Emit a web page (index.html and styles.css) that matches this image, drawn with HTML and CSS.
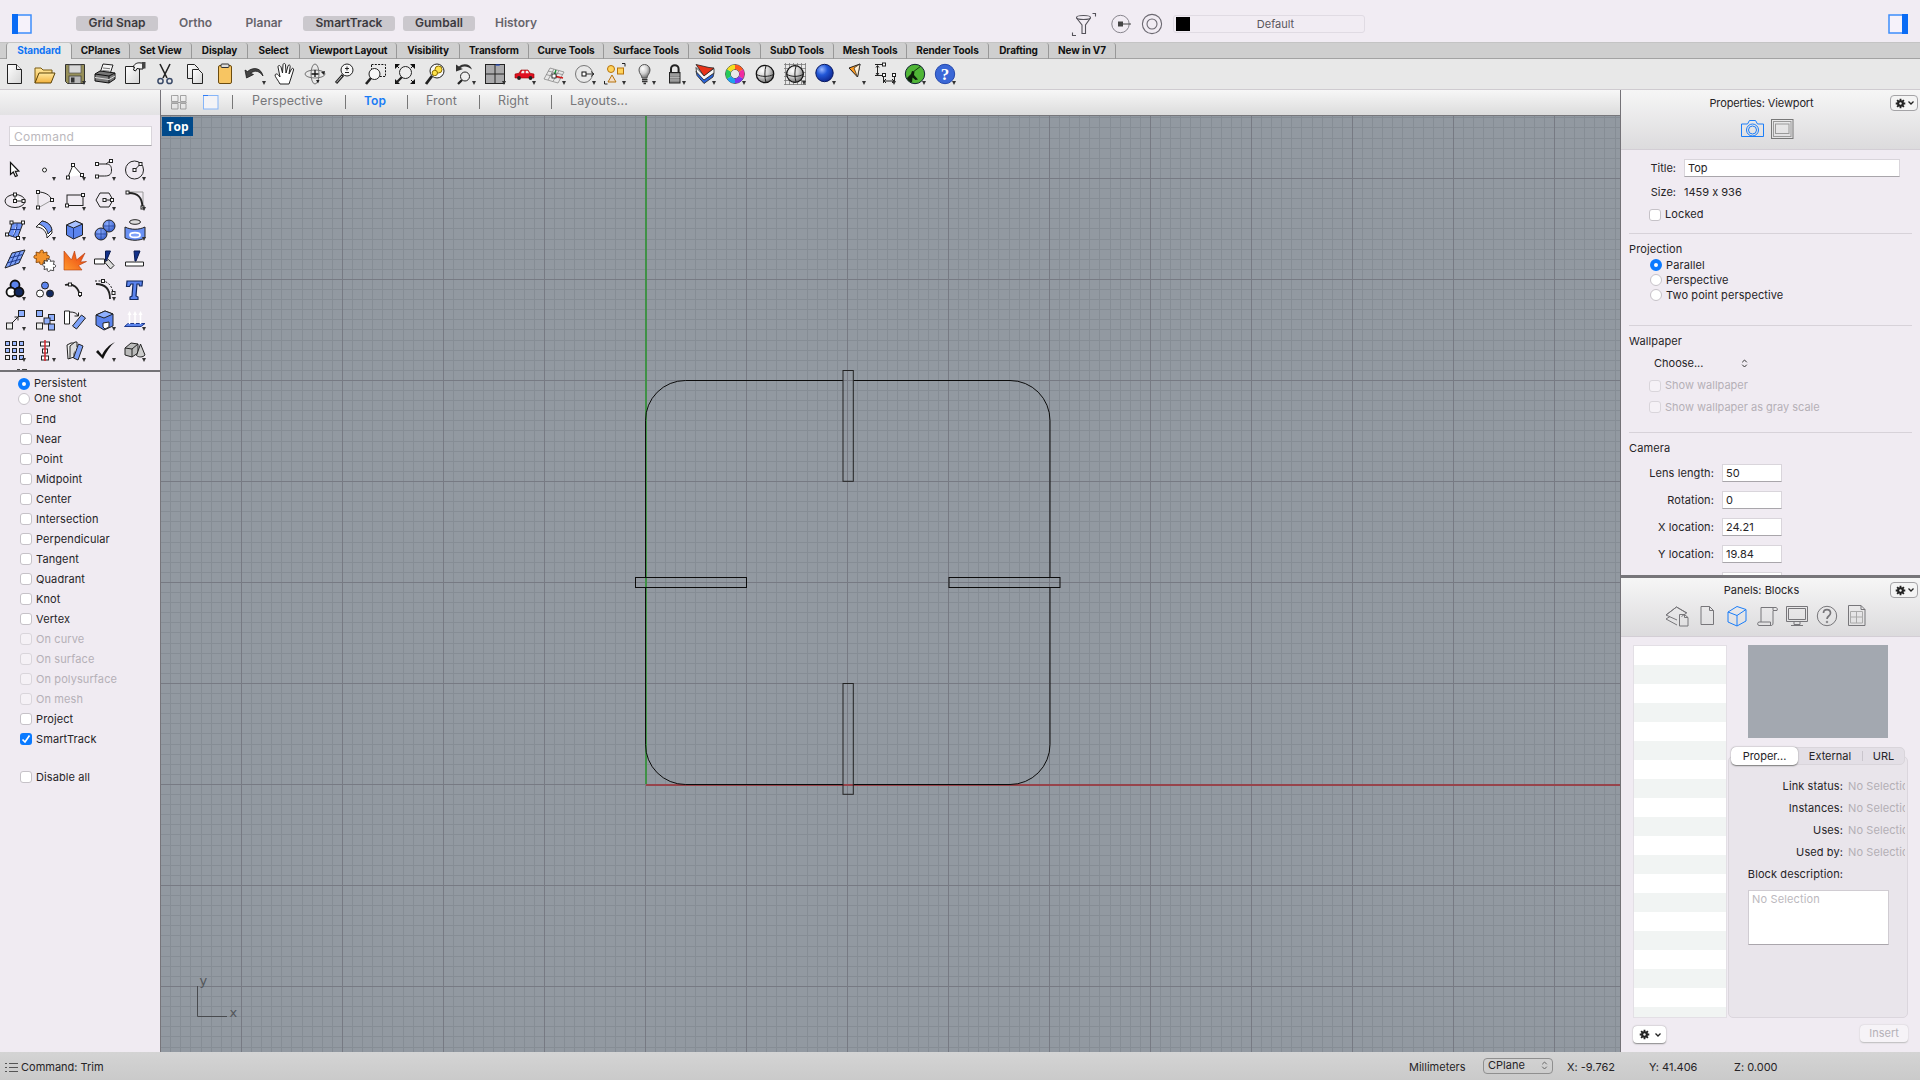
FILE: index.html
```html
<!DOCTYPE html>
<html lang="en">
<head>
<meta charset="utf-8">
<title>Rhino - Top viewport</title>
<link rel="stylesheet" href="styles.css">
</head>
<body>
<svg class="defs" width="0" height="0">
  <defs>
    <linearGradient id="paper" x1="0" y1="0" x2="1" y2="1"><stop offset="0" stop-color="#fff"/><stop offset="1" stop-color="#d4d4d4"/></linearGradient>
    <linearGradient id="folder" x1="0" y1="0" x2="0" y2="1"><stop offset="0" stop-color="#ffe9a0"/><stop offset="1" stop-color="#f3b23c"/></linearGradient>
    <radialGradient id="ball" cx=".35" cy=".3" r=".75"><stop offset="0" stop-color="#fff"/><stop offset=".5" stop-color="#d2d2d2"/><stop offset="1" stop-color="#6a6a6a"/></radialGradient>
    <radialGradient id="blueball" cx=".35" cy=".3" r=".8"><stop offset="0" stop-color="#9ab8ff"/><stop offset=".4" stop-color="#2258d8"/><stop offset="1" stop-color="#0a1f86"/></radialGradient>
    <radialGradient id="softball" cx=".4" cy=".3" r=".8"><stop offset="0" stop-color="#8fb0ff"/><stop offset="1" stop-color="#2f55c4"/></radialGradient>
    <linearGradient id="fire" x1="0" y1="1" x2="1" y2="0"><stop offset="0" stop-color="#ff9a2e"/><stop offset="1" stop-color="#e8380d"/></linearGradient>
    <symbol id="gear" viewBox="0 0 12 12"><g stroke="#222" stroke-width="2"><path d="M6 .8v10.4M.8 6h10.4M2.3 2.3l7.4 7.4M9.7 2.3L2.3 9.7"/></g><circle cx="6" cy="6" r="3.6" fill="#222"/><circle cx="6" cy="6" r="1.3" fill="#f4f4f4"/></symbol>
  </defs>
</svg>

<header class="topbar">
  <svg width="20" height="20" viewBox="0 0 20 20"><rect x="1" y="1" width="18" height="18" fill="#f6f2fa" stroke="#3d8dfb" stroke-width="1.5"/><rect x="0" y="0" width="6" height="20" fill="#0a6cf5"/></svg>
  <div class="modes">
    <span class="mode on w82">Grid Snap</span><span class="mode w75">Ortho</span><span class="mode w62">Planar</span><span class="mode on w92">SmartTrack</span><span class="mode on w72">Gumball</span><span class="mode w82">History</span>
  </div>
  <div class="filters">
    <svg width="26" height="24" viewBox="0 0 26 24" fill="none" stroke="#55535a" stroke-width="1.1"><ellipse cx="12.500" cy="5.500" rx="7" ry="2"/><path d="M5.500 6l5.500 7v8.500h3.500V13l5-7M21.500 1.500h3v3M1.500 20.500v3H5"/></svg>
    <svg width="24" height="24" viewBox="0 0 24 24" fill="none" stroke="#88858d" stroke-width="1"><circle cx="10.500" cy="12" r="8.700"/><path d="M11 12h10" stroke="#444"/><rect x="8" y="9.500" width="5" height="5" fill="#444" stroke="none"/></svg>
    <svg width="24" height="24" viewBox="0 0 24 24" fill="none" stroke="#6b6870" stroke-width="1.100"><circle cx="13" cy="12" r="9.600"/><circle cx="13" cy="12" r="5"/></svg>
    <div class="layer"><i></i><span>Default</span></div>
  </div>
  <svg width="20" height="20" viewBox="0 0 20 20"><rect x="1" y="1" width="18" height="18" fill="#f6f2fa" stroke="#3d8dfb" stroke-width="1.500"/><rect x="14" y="0" width="6" height="20" fill="#0a6cf5"/></svg>
</header>

<nav class="tabs">
  <span class="tab active t1">Standard</span><span class="tab t2">CPlanes</span><span class="tab t3">Set View</span><span class="tab t4">Display</span><span class="tab t5">Select</span><span class="tab t6">Viewport Layout</span><span class="tab t7">Visibility</span><span class="tab t8">Transform</span><span class="tab t9">Curve Tools</span><span class="tab t10">Surface Tools</span><span class="tab t11">Solid Tools</span><span class="tab t12">SubD Tools</span><span class="tab t13">Mesh Tools</span><span class="tab t14">Render Tools</span><span class="tab t15">Drafting</span><span class="tab t16">New in V7</span>
</nav>

<div class="toolbar">
  <span class="tool"><svg viewBox="0 0 30 30"><path d="M7.500 5.500h9l5 5v14h-14z" fill="url(#paper)" stroke="#222"/><path d="M16.500 5.500v5h5" fill="#eee" stroke="#222"/></svg></span>
  <span class="tool"><svg viewBox="0 0 30 30"><path d="M5 24V9h6l2 2h9v4" fill="url(#folder)" stroke="#7a5a10"/><path d="M5 24l4-10h16l-4 10z" fill="url(#folder)" stroke="#5a4208"/></svg></span>
  <span class="tool menu"><svg viewBox="0 0 30 30"><path d="M5.500 5.500h19v19h-17l-2-2z" fill="#97905a" stroke="#333"/><rect x="9" y="6" width="12" height="8" fill="#d9d9d9" stroke="#555" stroke-width=".7"/><rect x="9" y="17" width="12" height="7.500" fill="#b9b9b9" stroke="#333" stroke-width=".7"/><rect x="11" y="18.500" width="3.500" height="5" fill="#333"/></svg></span>
  <span class="tool"><svg viewBox="0 0 30 30"><path d="M10 14l3-9 10 1-3 9" fill="#f4f4f4" stroke="#222"/><path d="M13 9l7 .7M12.500 11.500l7 .7" stroke="#777"/><path d="M5 15l5-3 15 2v6l-6 4-14-2z" fill="#777" stroke="#111"/><path d="M5 15l14 2v7M19 17l6-3" stroke="#111" fill="none"/><path d="M5 18.500l14 2 6-3.500" stroke="#ddd" fill="none"/></svg></span>
  <span class="tool"><svg viewBox="0 0 30 30"><path d="M5.500 7.500h14v17h-14z" fill="url(#paper)" stroke="#222"/><path d="M13 8c2-4 5-4.500 8-4h2v6h-3l-3-.5-1.500 2.500-2-1 1-3z" fill="#f2f2f2" stroke="#111"/><rect x="22" y="3" width="3.500" height="6.500" fill="#444"/></svg></span>
  <span class="tool"><svg viewBox="0 0 30 30" fill="none"><path d="M10 5l7 14M20 5l-7 14" stroke="#222" stroke-width="1.600"/><circle cx="10.500" cy="22" r="2.600" stroke="#3a4a68" stroke-width="1.500"/><circle cx="19.500" cy="22" r="2.600" stroke="#3a4a68" stroke-width="1.500"/></svg></span>
  <span class="tool"><svg viewBox="0 0 30 30" fill="url(#paper)" stroke="#222"><path d="M7.500 5.500h7l4 4v10h-11z"/><path d="M12.500 10.500h6l4 4v10h-10z"/></svg></span>
  <span class="tool"><svg viewBox="0 0 30 30"><rect x="8.500" y="6.500" width="13" height="18" rx="1.500" fill="#f7c562" stroke="#6b4c10"/><rect x="11" y="5" width="8" height="3.500" rx="1" fill="#ddd" stroke="#333"/></svg></span>
  <span class="tool menu"><svg viewBox="0 0 30 30"><path d="M5 11l1.500 8 7-3.500-3-1.200c5-3.800 9-2 12.500 2.700-1.500-7.500-9-10-15.500-4.500z" fill="#444" stroke="#111" stroke-width=".7"/></svg></span>
  <span class="tool"><svg viewBox="0 0 30 30"><path d="M10 25c-2-4-5-7-5-9 1-2 3-1 5 2L8 8c0-2 2-2 3 0l1.500 6L13 6c0-2 2.500-2 2.500 0l.5 8 2-7c.5-1.700 2.500-1.200 2.200.6L19 15l2.500-5c1-1.500 2.500-.5 2 1L21 19l-2 6z" fill="#fff" stroke="#222"/></svg></span>
  <span class="tool"><svg viewBox="0 0 30 30" fill="none" stroke="#666" stroke-width=".9"><ellipse cx="15" cy="15" rx="10" ry="4"/><ellipse cx="15" cy="15" rx="4" ry="10"/><path d="M15 11v7M11.500 15h7" stroke="#111" stroke-width="1.300"/><path d="M16 21l3.500 0-1.500 3.500zM21 13l4-1-1 4z" fill="#222" stroke="none"/></svg></span>
  <span class="tool"><svg viewBox="0 0 30 30"><path d="M13 16l-7 8" stroke="#222" stroke-width="3"/><path d="M12 17l-5.500 6.300" stroke="#ccc"/><circle cx="17" cy="11" r="6" fill="#f7f7f7" stroke="#222"/><path d="M17 7.500v4M15 9.500h4M15 13.500h4" stroke="#222"/></svg></span>
  <span class="tool"><svg viewBox="0 0 30 30"><rect x="11.500" y="5.500" width="14" height="12" fill="none" stroke="#111" stroke-dasharray="2 1.300"/><path d="M11 19l-5 6" stroke="#222" stroke-width="2.600"/><circle cx="14.500" cy="15" r="5.500" fill="#f7f7f7" stroke="#222"/></svg></span>
  <span class="tool"><svg viewBox="0 0 30 30"><path d="M5 5h5l-5 5zM25 5h-5l5 5zM5 25h5l-5-5zM25 25h-5l5-5z" fill="#111"/><path d="M5 5l4 4M25 5l-4 4M25 25l-4-4" stroke="#111"/><path d="M12 18l-6 6" stroke="#222" stroke-width="2.300"/><circle cx="15.500" cy="13.500" r="6" fill="#eee" stroke="#222"/></svg></span>
  <span class="tool"><svg viewBox="0 0 30 30"><path d="M12 17l-6 8" stroke="#222" stroke-width="2.800"/><circle cx="17" cy="12" r="7" fill="#f7f7f7" stroke="#222"/><circle cx="18.500" cy="10.500" r="3.500" fill="#ffe34a" stroke="#8a6d00"/><circle cx="14.800" cy="14" r="2.700" fill="#ffe34a" stroke="#8a6d00"/></svg></span>
  <span class="tool menu"><svg viewBox="0 0 30 30"><path d="M6 5.500v7l7-2.500-2.500-1c3.500-2.500 7-1.700 11.500 1.500-1.500-5.500-8.500-7-13-3z" fill="#333"/><path d="M12 21l-4 4" stroke="#222" stroke-width="2.300"/><circle cx="15" cy="17.500" r="4.500" fill="#eee" stroke="#222"/></svg></span>
  <span class="tool menu"><svg viewBox="0 0 30 30"><rect x="5.500" y="5.500" width="19" height="19" fill="#a9a9ab" stroke="#222"/><path d="M15 5v20M5 15h20" stroke="#222"/><path d="M15.700 6h4" stroke="#2348b8" stroke-width="1.300"/></svg></span>
  <span class="tool menu"><svg viewBox="0 0 30 30"><path d="M5 19v-4l4-.8L11 11h7l2 3.200 4 .8v4z" fill="#e01020" stroke="#900" stroke-width=".6"/><path d="M12 11.800h2.300v2.400h-3.300zM15.700 11.800h2l1.300 2.400h-3.300z" fill="#eee"/><circle cx="9" cy="19" r="1.900" fill="#222"/><circle cx="20.500" cy="19" r="1.900" fill="#222"/></svg></span>
  <span class="tool menu"><svg viewBox="0 0 30 30" fill="none" stroke="#888" stroke-width=".8"><path d="M10 9l14 4-6 11L4 20zM8 12l15 3.700M6 15.500l15 4M14 10l-6 11M19 11.500l-6 11"/><path d="M14 17l9 2" stroke="#d01818" stroke-width="1.600"/><path d="M14 17l2-6" stroke="#179030" stroke-width="1.300"/><rect x="12" y="15" width="4" height="4" fill="#fff" stroke="#111"/></svg></span>
  <span class="tool menu"><svg viewBox="0 0 30 30" fill="none" stroke="#777"><circle cx="14" cy="15" r="8.500"/><path d="M14 15h10M21 12.500l3 2.500-3 2.500" stroke="#222" stroke-width=".9"/><rect x="12" y="13" width="4" height="4" fill="#fff" stroke="#111"/></svg></span>
  <span class="tool menu"><svg viewBox="0 0 30 30" fill="#ffd35c" stroke="#b5720c"><circle cx="11" cy="10" r="3.500"/><rect x="17.500" y="9" width="6" height="6"/><path d="M12 16l4 7H8z" fill="#f4ddc4"/><path d="M22 4.500h3v3M4.500 22v3h3" fill="none" stroke="#222"/></svg></span>
  <span class="tool menu"><svg viewBox="0 0 30 30"><path d="M12 19c0-3-3-4-3-8a5.500 5.500 0 0111 0c0 4-3 5-3 8z" fill="url(#ball)" stroke="#555"/><path d="M12 20.500h5.500M12 22.500h5.500M13.500 24.500h2.500" stroke="#333" stroke-width="1.300"/></svg></span>
  <span class="tool menu"><svg viewBox="0 0 30 30"><path d="M11 14v-4a3.800 3.800 0 017.600 0v4" fill="none" stroke="#222" stroke-width="2"/><rect x="9.500" y="13.500" width="10.500" height="10.500" fill="#888" stroke="#222"/><path d="M10 16h9.500M10 18.500h9.500M10 21h9.500" stroke="#bbb" stroke-width=".8"/></svg></span>
  <span class="tool menu"><svg viewBox="0 0 30 30" stroke="#222" stroke-width=".8"><path d="M6 12l8 8 10-6-1 4-9 6.500-7-8z" fill="#2b64d8"/><path d="M6 8.500l8 8 10-7v4.500l-10 7-7.500-8z" fill="#f6f6f6"/><path d="M6 5.500l13 3 5 .5-10 8z" fill="#e83318"/></svg></span>
  <span class="tool menu"><svg viewBox="0 0 30 30" fill="none" stroke-width="4.600"><circle cx="15" cy="15" r="9.300" stroke="#333" stroke-width="1"/><circle cx="15" cy="15" r="4.600" stroke="#555" stroke-width="1"/><path d="M15 8a7 7 0 016 3.500" stroke="#ff5a1e"/><path d="M21 11.500a7 7 0 010 7" stroke="#f02ca0"/><path d="M21 18.500a7 7 0 01-6 3.500" stroke="#7a35f0"/><path d="M15 22a7 7 0 01-6-3.500" stroke="#1ea0f0"/><path d="M9 18.500a7 7 0 010-7" stroke="#26c95a"/><path d="M9 11.500A7 7 0 0115 8" stroke="#f2e01e"/></svg></span>
  <span class="tool"><svg viewBox="0 0 30 30"><circle cx="15" cy="15" r="8.700" fill="url(#ball)" stroke="#111" stroke-width="1.300"/><path d="M6.500 15.500c5 2.500 12 2.500 17 0M16 6.500c-1.500 5-1.500 12 0 17" fill="none" stroke="#222"/></svg></span>
  <span class="tool menu"><svg viewBox="0 0 30 30"><path d="M5.500 4v22M9.500 4v22M13.500 4v22M17.500 4v22M21.500 4v22M25.500 4v22M4 5.500h22M4 9.500h22M4 13.500h22M4 17.500h22M4 21.500h22M4 25.500h22" stroke="#777" stroke-width=".8"/><circle cx="15" cy="15" r="8.300" fill="url(#ball)" stroke="#111" stroke-width="1.300"/><path d="M7 15.500c5 2.500 11 2.500 16 0M16 7c-1.500 5-1.500 11 0 16" fill="none" stroke="#222"/></svg></span>
  <span class="tool menu"><svg viewBox="0 0 30 30"><circle cx="14.500" cy="14" r="8.700" fill="url(#blueball)" stroke="#0a1a60"/></svg></span>
  <span class="tool menu"><svg viewBox="0 0 30 30"><path d="M9 9l11-4-2.500 13z" fill="#ff9a1e" stroke="#222"/><path d="M20 5l-2.500 13L14 9z" fill="#fff1d8" stroke="#222" stroke-width=".7"/></svg></span>
  <span class="tool menu"><svg viewBox="0 0 30 30" fill="none" stroke="#222"><path d="M5 5.500h9M7.500 7v9M5 16.500h9M13.500 16v8M24.500 16v8M14 22h10M6 8.500L7.500 6.500 9 8.500M6 14l1.500 2L9 14M16 20l-2 2 2 2M22 20l2 2-2 2"/><rect x="12.500" y="4" width="3" height="3" fill="#fff"/><rect x="12.500" y="14.500" width="3" height="3" fill="#fff"/><rect x="22.500" y="14.500" width="3" height="3" fill="#fff"/></svg></span>
  <span class="tool menu"><svg viewBox="0 0 30 30"><circle cx="15" cy="15" r="9.700" fill="#4fb536" stroke="#123"/><path d="M7 19l4-4 1-3 2.500.5-.5 3.500 4 4.500-2.500.5-3-2.500-.5 5c-3-.5-4.500-2.500-5-4.500z" fill="#0c1f0a"/><path d="M13 13L21 7" stroke="#173d10"/></svg></span>
  <span class="tool menu"><svg viewBox="0 0 30 30"><circle cx="15" cy="15" r="9.700" fill="#3a67d6" stroke="#2448ac"/><text x="15" y="21" text-anchor="middle" class="help">?</text></svg></span>
</div>

<main class="work">
  <aside class="left">
    <div class="left-head"></div>
    <div class="command">Command</div>
    <div class="palette">
      <span class="tool"><svg viewBox="0 0 30 30"><path d="M10.500 7.500v12l2.800-2.500 2 4.500 2-.9-2-4.300 3.500-.3z" fill="#fff" stroke="#111" stroke-width="1.200"/></svg></span>
      <span class="tool menu"><svg viewBox="0 0 30 30"><circle cx="14.500" cy="15" r="2" fill="#fff" stroke="#222"/></svg></span>
      <span class="tool menu"><svg viewBox="0 0 30 30" class="ln"><path d="M8 22l5-12 9 10"/><rect x="6.500" y="21" width="3" height="3"/><rect x="11.500" y="8.500" width="3" height="3"/><rect x="20.500" y="18.500" width="3" height="3"/></svg></span>
      <span class="tool menu"><svg viewBox="0 0 30 30" class="ln"><path d="M8 9h8c4 0 5.500 2 5.500 6s-1.500 6-7 6H8M20 6l-4 3" fill="none"/><rect x="5.500" y="7.500" width="3" height="3"/><rect x="5.500" y="20" width="3" height="3"/><rect x="19.500" y="4.500" width="3" height="3"/></svg></span>
      <span class="tool menu"><svg viewBox="0 0 30 30" class="ln"><circle cx="14.500" cy="15" r="9" fill="none"/><path d="M14.500 15l6-6"/><rect x="13" y="13.500" width="3" height="3"/><rect x="19" y="7.500" width="3" height="3"/></svg></span>

      <span class="tool menu"><svg viewBox="0 0 30 30" class="ln"><ellipse cx="15" cy="16" rx="10" ry="6.500" fill="none"/><path d="M15 10v6h9"/><rect x="13.500" y="8" width="3" height="3"/><rect x="13.500" y="14.500" width="3" height="3"/><rect x="22" y="14.500" width="3" height="3"/></svg></span>
      <span class="tool menu"><svg viewBox="0 0 30 30" class="ln"><path d="M8 7v16M8 23l14-8" stroke="#999"/><path d="M8 7c7 0 12 3 14 8" fill="none"/><rect x="6.500" y="5.500" width="3" height="3"/><rect x="6.500" y="21" width="3" height="3"/><rect x="20.500" y="13.500" width="3" height="3"/></svg></span>
      <span class="tool menu"><svg viewBox="0 0 30 30" class="ln"><rect x="7" y="10" width="16" height="10.500" fill="none"/><rect x="5.500" y="19" width="3" height="3"/><rect x="21.500" y="8.500" width="3" height="3"/></svg></span>
      <span class="tool menu"><svg viewBox="0 0 30 30" class="ln"><path d="M10 8h9l4 7-4 7h-9l-4-7z" fill="none"/><path d="M14.500 15h7"/><rect x="13" y="13.500" width="3" height="3"/><rect x="20.500" y="13.500" width="3" height="3"/></svg></span>
      <span class="tool menu"><svg viewBox="0 0 30 30" class="ln"><path d="M9 7h14v14" fill="none" stroke="#999"/><path d="M9 8c9 0 13 4 13.500 14" fill="none" stroke-width="2"/><rect x="6" y="6" width="3" height="3"/><rect x="21" y="21" width="3" height="3"/></svg></span>

      <span class="tool menu"><svg viewBox="0 0 30 30" class="ln"><path d="M11.500 8H23l-5.500 15L7.500 20c3-4 4-8 4-12z" fill="#6f94f5"/><path d="M17 8c0 5-1 9-4.500 14M10.500 14.500h10" stroke="#1d398c"/><rect x="10" y="6" width="3" height="3"/><rect x="21.500" y="6" width="3" height="3"/><rect x="5.500" y="18" width="3" height="3"/><rect x="16.500" y="21.500" width="3" height="3"/></svg></span>
      <span class="tool menu"><svg viewBox="0 0 30 30" class="ln"><path d="M6 12l6-6c7 1 10 6 10 12l-5 5c0-6-4-11-11-11z"/><path d="M9 9l3-3c6 1 9 4 10 9l-4 4c-1-5-4-8-9-10z" fill="#7398f7"/></svg></span>
      <span class="tool menu"><svg viewBox="0 0 30 30" class="ln"><path d="M6.500 10l9-4 7 3v11l-9 4-7-4z" fill="#5b84ee"/><path d="M6.500 10l7 3 9-4-7-3z" fill="#a9c1ff"/><path d="M13.500 13v11" stroke="#1d398c"/></svg></span>
      <span class="tool menu"><svg viewBox="0 0 30 30" class="ln"><circle cx="19" cy="11" r="6" fill="url(#softball)"/><circle cx="11" cy="19" r="6" fill="url(#softball)"/><path d="M5 19h12M11 13v12M13 11h12M19 5v12" stroke="#1d398c" stroke-width=".7"/></svg></span>
      <span class="tool menu"><svg viewBox="0 0 30 30" class="ln"><ellipse cx="15" cy="7" rx="5.500" ry="2.300" fill="#ddd"/><path d="M5 12c6 3 14 3 20 0v11c-6 3-14 3-20 0z" fill="#6a91f4"/><ellipse cx="15" cy="20" rx="5" ry="2.400" fill="#7fa2f8" stroke="#fff" stroke-width="1.800"/></svg></span>

      <span class="tool menu"><svg viewBox="0 0 30 30" class="ln"><path d="M12 8l13-3-6 13-14 5z" fill="#7fa2f8"/><path d="M16 7l-6.500 14.500M20.500 6l-6 13.500M9.500 13l13-3.500M7 18l14-4" stroke="#1d398c"/></svg></span>
      <span class="tool"><svg viewBox="0 0 30 30" stroke="#222" stroke-width=".8"><path d="M6 7l4 1c-1-3 3-4 3.500-1.500L13 8l4-1v3.500c2.500-1 3.500 2.500 1 3.500l-1.500-.5.500 4-4-.5c1 3-3 3.500-3.500 1L10 17l-4 .5.500-4c-3 1-3.500-3-1-3.500l1 .5z" fill="#f2932c" stroke="#7a3a00"/><path d="M14 15.500l3.500.8c-.5-2.500 2.800-3 3-1l-.3 1 4-.3-.8 3.500c2.500-.5 3 2.500 1 3l-1-.3.300 3.500-3.500-.7c0 2-3 2-3 0l.2-1.300-3.400.8.700-3.300c-2.200.5-2.800-2.300-.7-2.800l.8.200z" fill="#fff"/></svg></span>
      <span class="tool"><svg viewBox="0 0 30 30"><path d="M4 6l7.500 9L14.500 6l2 9L25 8l-4.500 9 6-.5-8 4 3.500 4.500H4z" fill="url(#fire)" stroke="#b03a0a" stroke-width=".6"/></svg></span>
      <span class="tool"><svg viewBox="0 0 30 30" class="ln"><path d="M14.500 17l4-2.500 5.500 6-3.500 3.500z" fill="#ddd"/><path d="M4.500 14h10v5h-10z"/><path d="M15.500 6h5l-4 9.500h-1z" fill="#12308a" stroke="#0a1a50"/></svg></span>
      <span class="tool"><svg viewBox="0 0 30 30" class="ln"><path d="M5.500 17h18v4h-18z"/><path d="M14 6h6l-4 10h-1z" fill="#12308a" stroke="#0a1a50"/></svg></span>

      <span class="tool menu"><svg viewBox="0 0 30 30" stroke="#111" stroke-width="1.800"><circle cx="15" cy="10" r="4.500" fill="#5b84ee"/><circle cx="11" cy="17" r="4.500" fill="#fff"/><circle cx="19" cy="17" r="4.500" fill="#12285f"/></svg></span>
      <span class="tool"><svg viewBox="0 0 30 30" stroke="#222"><circle cx="15" cy="10.500" r="3.500" fill="#5b84ee"/><circle cx="10" cy="18.500" r="3.500" fill="#fff"/><circle cx="20" cy="18.500" r="3.500" fill="#12285f"/></svg></span>
      <span class="tool"><svg viewBox="0 0 30 30" class="ln"><path d="M5 10c8-2 14 2 15 12" fill="none" stroke-width="1.800"/><rect x="8.500" y="8" width="3" height="3"/><rect x="18.500" y="17.500" width="3" height="3"/></svg></span>
      <span class="tool menu"><svg viewBox="0 0 30 30" class="ln"><path d="M6 9c8 0 14 4 14 15" fill="none" stroke-width="1.800"/><path d="M5 6h9c5 2 8 5 9 12" fill="none" stroke-dasharray="2 1.500"/><rect x="11.500" y="4.500" width="3" height="3"/><rect x="22" y="16.500" width="3" height="3"/></svg></span>
      <span class="tool"><svg viewBox="0 0 30 30"><path d="M7 6h15.500l-.5 5h-2.500l-.5-2h-2l-1 12 2 1v2.500H10V22l2-1 1-12h-2l-1.500 2.500H6.500z" fill="#5b84ee" stroke="#12285f" stroke-width="1.200"/></svg></span>

      <span class="tool menu"><svg viewBox="0 0 30 30" class="ln"><path d="M12 18l6-6M14.500 12H18v3.500" fill="none"/><rect x="6.500" y="18" width="6" height="6" fill="#eee"/><rect x="18.500" y="5.500" width="6" height="6" fill="#8fb0ff"/></svg></span>
      <span class="tool"><svg viewBox="0 0 30 30" class="ln"><g fill="#8eadfa"><rect x="6.500" y="5.500" width="6" height="6"/><rect x="18.500" y="9.500" width="6" height="6"/><rect x="14" y="13" width="6" height="6"/><rect x="18.500" y="19" width="6" height="6"/></g><rect x="6.500" y="18" width="6" height="6" fill="#eee"/></svg></span>
      <span class="tool"><svg viewBox="0 0 30 30" class="ln"><path d="M4.500 6h5v13h-5z"/><path d="M12.500 21l9-11 4 3-9 11z" fill="#7fa2f8"/><path d="M10 7c4 0 7 1 8 4M18.500 7.500V11h-4" fill="none"/></svg></span>
      <span class="tool menu"><svg viewBox="0 0 30 30" class="ln"><path d="M6 10l9-4 8 3v12l-9 4-8-5z" fill="#5b84ee"/><path d="M6 10l8 3 9-4-8-3z" fill="#8fb0ff"/><path d="M13 18l6-1v5l-4 2-2-2z" fill="#fff"/></svg></span>
      <span class="tool menu"><svg viewBox="0 0 30 30"><path d="M8 18.500h17l-4 3H4.500z" fill="#5b84ee" stroke="#1d398c"/><path d="M9.500 19V9M15 19V9M20.500 19V9" stroke="#fff" stroke-width="1.500"/><path d="M7.500 10l2-4 2 4zM13 10l2-4 2 4zM18.500 10l2-4 2 4z" fill="#fff"/></svg></span>

      <span class="tool menu"><svg viewBox="0 0 30 30" class="ln"><g fill="#9db9ff"><rect x="5.500" y="5.500" width="4" height="4"/><rect x="12.500" y="5.500" width="4" height="4"/><rect x="19.500" y="5.500" width="4" height="4"/><rect x="5.500" y="12.500" width="4" height="4"/><rect x="12.500" y="12.500" width="4" height="4"/><rect x="19.500" y="12.500" width="4" height="4"/><rect x="12.500" y="19.500" width="4" height="4"/><rect x="19.500" y="19.500" width="4" height="4"/></g><rect x="5.500" y="19.500" width="4" height="4" fill="#eee"/></svg></span>
      <span class="tool menu"><svg viewBox="0 0 30 30" class="ln"><rect x="10.500" y="6" width="9" height="4"/><rect x="12.500" y="13" width="5" height="4"/><rect x="11.500" y="20" width="7" height="4"/><path d="M15 4v21" stroke="#d8252b" stroke-width="1.500"/></svg></span>
      <span class="tool menu"><svg viewBox="0 0 30 30" class="ln"><path d="M7 9l4-2h3v14l-6 2z" fill="#eee"/><path d="M10 23V10l5-4h2v5" fill="#ddd"/><path d="M13.500 22l5-14 4.500 2-5 14z" fill="#7fa2f8"/></svg></span>
      <span class="tool menu"><svg viewBox="0 0 30 30"><path d="M6 16l2-2 4 5C15 13 19 9 25 6c-5 4-9 10-12 17z" fill="#111"/></svg></span>
      <span class="tool menu"><svg viewBox="0 0 30 30" class="ln"><path d="M5 12l6-5 7 1v9l-6 4-7-2z" fill="#bbb"/><path d="M5 12l7 1 6-5M12 13v8" fill="none"/><path d="M16.500 19.500L20.500 8 25 19c-2 2.500-6.500 2.500-8.500.5z" fill="#ccc"/></svg></span>
    </div>
    <div class="stub"><i></i><i class="wide"></i></div>
    <div class="osnap">
      <label class="opt radio on"><i></i>Persistent</label>
      <label class="opt radio"><i></i>One shot</label>
      <div class="checks">
        <label class="opt"><i></i>End</label><label class="opt"><i></i>Near</label><label class="opt"><i></i>Point</label><label class="opt"><i></i>Midpoint</label><label class="opt"><i></i>Center</label><label class="opt"><i></i>Intersection</label><label class="opt"><i></i>Perpendicular</label><label class="opt"><i></i>Tangent</label><label class="opt"><i></i>Quadrant</label><label class="opt"><i></i>Knot</label><label class="opt"><i></i>Vertex</label><label class="opt off"><i></i>On curve</label><label class="opt off"><i></i>On surface</label><label class="opt off"><i></i>On polysurface</label><label class="opt off"><i></i>On mesh</label><label class="opt"><i></i>Project</label><label class="opt on"><i><svg width="12" height="12" viewBox="0 0 12 12"><path d="M2.500 6.500L5 9l4.500-6.500" fill="none" stroke="#fff" stroke-width="1.700"/></svg></i>SmartTrack</label>
      </div>
      <label class="opt disable"><i></i>Disable all</label>
    </div>
  </aside>

  <section class="center">
    <div class="viewtabs">
      <svg class="layout-icon" width="16" height="15" viewBox="0 0 16 15" fill="none" stroke="#8f8f8f"><path d="M1.500.500H7v6H.500v-6zM9.500.500h5.500v6H9.500zM.500 8.500H7V14H.500zM9.500 8.500h5.500V14H9.500z" stroke-width=".8"/><path d="M7 7.500h2.500M0 7.500h16" stroke-width=".6"/></svg>
      <svg class="layout-icon second" width="16" height="15" viewBox="0 0 16 15"><rect x=".5" y=".5" width="14.500" height="13.500" fill="#f3f3f6" stroke="#86b5f8"/><path d="M0 .500h5" stroke="#2f7cf6"/></svg>
      <span class="vt">Perspective</span><span class="vt cur">Top</span><span class="vt v3">Front</span><span class="vt v3">Right</span><span class="vt lay">Layouts...</span>
    </div>
    <div class="viewport">
      <svg id="scene" width="1459" height="936" viewBox="161 116 1459 936">
        <g id="grid" shape-rendering="crispEdges"></g>
        <path d="M646 116V784" stroke="#3f9146" stroke-width="2"/>
        <path d="M646 785H1620" stroke="#97444b" stroke-width="2"/>
        <g fill="none" stroke="#0c0c0c">
          <path d="M843 380.500H685.500a40 40 0 00-40 40V577M645.500 588V744.500a40 40 0 0040 40H843M853.500 784.500H1010a40 40 0 0040-40V588M1050 577V420.500a40 40 0 00-40-40H853.500"/>
          <rect x="843" y="370.500" width="10.300" height="110.800" class="upright"/><rect x="843" y="683.500" width="10.300" height="110.800" class="upright"/>
          <rect x="635.500" y="577.500" width="111" height="10"/><rect x="949" y="577.500" width="111" height="10"/>
        </g>
        <path d="M197.500 986V1016.500H227" fill="none" stroke="#484a4e"/>
        <text x="199.500" y="985" class="axis">y</text><text x="229.500" y="1016.500" class="axis">x</text>
      </svg>
      <span class="view-label">Top</span>
    </div>
  </section>

  <aside class="right">
    <div class="phead">
      <div class="ptitle">Properties: Viewport</div><span class="gearbtn"><svg width="11" height="11"><use href="#gear"/></svg><svg width="6" height="4" viewBox="0 0 6 4"><path d="M.5.500L3 3 5.500.500" fill="none" stroke="#222" stroke-width="1.300"/></svg></span>
      <div class="picons p1">
        <svg width="23" height="20" viewBox="0 0 23 20" fill="none" stroke="#1a7df8"><path d="M.5 5h6l2-3.500h6L16.500 5h6v12.500H.5z"/><circle cx="11.500" cy="11" r="6"/><circle cx="11.500" cy="11" r="4"/></svg>
        <svg width="23" height="20" viewBox="0 0 23 20" fill="none" stroke="#777"><rect x=".5" y=".5" width="21.500" height="19"/><rect x="2.500" y="2.500" width="17.500" height="15" stroke="#999"/><rect x="4.500" y="5" width="13.500" height="9.500" stroke="#999"/></svg>
      </div>
    </div>
    <div class="props">
      <div class="row r-title"><span class="lab">Title:</span><span class="field">Top</span></div>
      <div class="row r-size"><span class="lab">Size:</span><span>1459 x 936</span></div>
      <label class="opt r-lock"><i></i>Locked</label>
      <hr>
      <h4>Projection</h4>
      <div class="radios"><label class="opt radio on"><i></i>Parallel</label><label class="opt radio"><i></i>Perspective</label><label class="opt radio"><i></i>Two point perspective</label></div>
      <hr class="second">
      <h4>Wallpaper</h4>
      <div class="choose"><span>Choose...</span><svg width="7" height="9" viewBox="0 0 7 9" fill="none" stroke="#333"><path d="M1.200 3.300L3.500 1l2.300 2.300M1.200 5.700L3.500 8l2.300-2.300"/></svg></div>
      <label class="opt off r22"><i></i>Show wallpaper</label>
      <label class="opt off r22"><i></i>Show wallpaper as gray scale</label>
      <hr class="third">
      <h4>Camera</h4>
      <div class="cam"><div><span>Lens length:</span><b>50</b></div><div><span>Rotation:</span><b>0</b></div><div><span>X location:</span><b>24.21</b></div><div><span>Y location:</span><b>19.84</b></div><div class="peek"><span></span><b></b></div></div>
    </div>
    <div class="phead blocks">
      <div class="ptitle">Panels: Blocks</div><span class="gearbtn"><svg width="11" height="11"><use href="#gear"/></svg><svg width="6" height="4" viewBox="0 0 6 4"><path d="M.5.500L3 3 5.500.500" fill="none" stroke="#222" stroke-width="1.300"/></svg></span>
      <div class="picons p2">
        <svg viewBox="0 0 24 24"><path d="M12 16L1 11 11.500 3 22 9M1 11L11.500 3l10 6-5 3.500M5 12.500L1 15l11 6"/><path d="M14.500 10.500h5l3.500 3v8.500h-8.500zM19.500 10.500v3H23"/></svg>
        <svg viewBox="0 0 24 24"><path d="M6 2.500h8.500l4 4v14H6zM14.500 2.500v4h4"/></svg>
        <svg viewBox="0 0 24 24" class="sel"><path d="M3 8l9-5.500 9 3V17l-9 5-9-4zM3 8l9 3.500 9-6M12 11.500V22"/></svg>
        <svg viewBox="0 0 24 24"><path d="M6 18V3.500h15a2 2 0 011 3h-4V19c0 2-1 2.500-2 2.500H4a1.800 1.800 0 010-3.500h11.500v3M18 6V4"/></svg>
        <svg viewBox="0 0 24 24"><path d="M1.500 2.500h21v15h-21zM3.500 4.500h17v11h-17zM9 17.500v3h6v-3M6 21.500h12"/></svg>
        <svg viewBox="0 0 24 24"><circle cx="12" cy="12" r="9.700"/><path d="M8.500 9c0-4.500 7-4.500 7 0 0 3-3.500 3-3.500 6" stroke-width="1.700"/><circle cx="12" cy="18" r=".8"/></svg>
        <svg viewBox="0 0 24 24"><path d="M3.500 1.500H16l4 4v16H3.500zM16 1.500v4h4"/><path d="M5.500 7.500h12V19h-12zM11.500 7.500V19M5.500 13h12" stroke="#aaa"/></svg>
      </div>
    </div>
    <div class="blocks-body">
      <div class="lists">
        <div class="blocklist"></div>
        <div class="detail">
          <div class="preview"></div>
          <div class="segs"><span class="seg on">Proper...</span><span class="seg s2">External</span><span class="seg s3">URL</span></div>
          <div class="card">
            <div class="info"><span>Link status:</span><em>No Selection</em></div><div class="info"><span>Instances:</span><em>No Selection</em></div><div class="info"><span>Uses:</span><em>No Selection</em></div><div class="info"><span>Used by:</span><em>No Selection</em></div><div class="info"><span>Block description:</span></div>
            <div class="desc">No Selection</div>
          </div>
        </div>
      </div>
      <div class="actions"><span class="act"><svg width="11" height="11"><use href="#gear"/></svg><svg width="6" height="4" viewBox="0 0 6 4"><path d="M.5.500L3 3 5.500.500" fill="none" stroke="#222" stroke-width="1.300"/></svg></span><span class="insert">Insert</span></div>
    </div>
  </aside>
</main>

<footer class="status">
  <svg width="13" height="11" viewBox="0 0 13 11"><path d="M0 1.500h2M4 1.500h9M0 5.500h2M4 5.500h9M0 9.500h2M4 9.500h9" stroke="#555" fill="none"/></svg>
  <span class="cmd">Command: Trim</span>
  <span class="units">Millimeters</span>
  <span class="cplane">CPlane<svg width="7" height="9" viewBox="0 0 7 9" fill="none" stroke="#666"><path d="M1.200 3.300L3.500 1l2.300 2.300M1.200 5.700L3.500 8l2.300-2.300"/></svg></span>
  <span class="cx">X: -9.762</span><span class="cy">Y: 41.406</span><span class="cz">Z: 0.000</span>
</footer>
<script src="grid.js"></script>
</body>
</html>
```
FILE: grid.js
```js
// Construction plane grid: a minor line every unit, a major line every ten.
const view = { left: 161, top: 116, right: 1620, bottom: 1052 };
const origin = { x: 645.4, y: 784.4 };
const unit = 10.1;
let minor = "", major = "";
for (let k = -60; k <= 110; k++) {
  const x = Math.floor(origin.x + k * unit) + 0.5;
  if (x > view.left && x < view.right) {
    const d = `M${x} ${view.top}V${view.bottom}`;
    if (k % 10 === 0) major += d; else minor += d;
  }
  const y = Math.floor(origin.y - k * unit) + 0.5;
  if (y > view.top && y < view.bottom) {
    const d = `M${view.left} ${y}H${view.right}`;
    if (k % 10 === 0) major += d; else minor += d;
  }
}
document.getElementById("grid").innerHTML =
  `<path class="minor" d="${minor}"/><path class="major" d="${major}"/>`;
```
FILE: styles.css
```css
* { box-sizing: border-box; }
html, body { height: 100%; }
body {
  margin: 0; width: 1920px; height: 1080px; overflow: hidden;
  display: flex; flex-direction: column;
  background: #f0ebf2; color: #262427;
  font: 11px/15px Inter, "Liberation Sans", sans-serif;
  font-feature-settings: "calt" 0;
}
svg { display: block; flex: none; }
.defs { position: absolute; }

.topbar { height: 42px; flex: none; display: flex; align-items: flex-start; padding: 14px 12px 0; background: #f1ecf3; }
.modes { display: flex; margin: 2px 0 0 44px; }
.mode { height: 15px; line-height: 14px; text-align: center; font-size: 12px; font-weight: 600; color: #67646b; border-radius: 3px; }
.mode.on { background: #cbc8cd; color: #3c3a3f; }
.w82 { width: 82px; } .w75 { width: 75px; } .w62 { width: 62px; } .w92 { width: 92px; margin-left: 8px; } .w72 { width: 72px; margin-left: 8px; }
.filters { display: flex; width: 294px; margin: -2px 523px 0 auto; }
.filters svg:nth-child(2) { margin-left: 13px; }
.filters svg:nth-child(3) { margin-left: 5px; }
.layer { width: 192px; height: 18px; margin: 3px 0 0 10px; flex: none; border: 1px solid #e0dbe3; border-radius: 3px; display: flex; align-items: center; }
.layer i { width: 14px; height: 14px; background: #000; margin-left: 2px; }
.layer span { flex: 1; text-align: center; padding-right: 3px; color: #59565c; }

.tabs { height: 17px; flex: none; display: flex; padding-left: 6px; background: #cfcfcf; border-top: 1px solid #c4c4c4; border-bottom: 1px solid #a3a3a3; }
.tab { height: 16px; line-height: 14px; text-align: center; font-size: 10px; font-weight: 700; color: #111; border-right: 1px solid #989898; border-radius: 0 3px 0 0; white-space: nowrap; letter-spacing: -.12px; }
.tab.active { background: #e8e8e8; color: #0f74f5; border-left: 1px solid #989898; border-radius: 3px 3px 0 0; }
.t1 { width: 66px; } .t2 { width: 58px; } .t3 { width: 62px; } .t4 { width: 56px; } .t5 { width: 52px; } .t6 { width: 97px; } .t7 { width: 63px; } .t8 { width: 69px; }
.t9 { width: 75px; } .t10 { width: 85px; } .t11 { width: 72px; } .t12 { width: 73px; } .t13 { width: 73px; } .t14 { width: 82px; } .t15 { width: 60px; } .t16 { width: 67px; }

.toolbar { height: 31px; flex: none; display: flex; background: #e8e8e8; border-bottom: 1px solid #cfcbd0; }
.tool { width: 30px; height: 30px; position: relative; flex: none; }
.tool svg { width: 30px; height: 30px; }
.tool.menu::after { content: ""; position: absolute; left: 21.500px; top: 22px; border: 2.700px solid transparent; border-top: 4.500px solid #333; border-bottom: 0; }
.ln { stroke: #222; fill: #fff; }
.help { font: 700 17px "Liberation Serif", serif; fill: #fff; }

.work { flex: 1; min-height: 0; display: flex; }
.left { width: 161px; flex: none; border-right: 1px solid #77757a; background: #f0ebf2; }
.left-head { height: 25px; background: linear-gradient(#f5f5f5, #e3e2e4); }
.command { width: 143px; height: 20px; margin: 11px 0 0 9px; padding-left: 4px; background: #fff; border: 1px solid #d9d5db; border-bottom-color: #a9a6ab; font-size: 12px; line-height: 19px; color: #bbb8bd; letter-spacing: .3px; }
.palette { display: grid; grid-template-columns: repeat(5, 30px); grid-auto-rows: 30.100px; margin-top: 9px; height: 212px; }
.stub { height: 5px; padding: 2px 0 0 17px; display: flex; gap: 2px; border-bottom: 2px solid #747277; }
.stub i { width: 3px; height: 1px; background: #444; } .stub .wide { width: 5px; }
.osnap { padding-top: 4px; }
.opt { display: flex; align-items: center; gap: 4px; height: 20px; letter-spacing: .1px; white-space: nowrap; }
.opt i { width: 12px; height: 12px; background: #fff; border: 1px solid #c6c2c8; border-radius: 3px; flex: none; }
.opt.on i { background: #0a7aff; border: 0; }
.opt.off { color: #b5b0b7; }
.opt.off i { background: #f5f1f6; border-color: #d9d5db; }
.opt.radio { height: 15px; }
.opt.radio i { border-radius: 50%; }
.opt.radio.on i { border: 4px solid #0a7aff; background: #fff; }
.osnap > .radio { padding-left: 18px; }
.checks { padding: 3px 0 0 20px; }
.disable { margin: 18px 0 0 20px; }

.center { width: 1459px; flex: none; display: flex; flex-direction: column; }
.viewtabs { height: 26px; display: flex; background: linear-gradient(#f7f7f7, #dcdcdc); border-bottom: 1px solid #77777b; padding-left: 10px; }
.layout-icon { margin-top: 5px; } .second { margin-left: 16px; margin-right: 13px; }
.vt { width: 113px; height: 14px; margin-top: 5px; border-left: 1px solid #777; padding-left: 19px; font-size: 12.500px; line-height: 12px; color: #77777a; letter-spacing: .1px; }
.vt.cur { width: 62px; padding-left: 18px; color: #1a7cf5; font-weight: 600; font-size: 12px; } .v3, .lay { padding-left: 18px; } .v3 { width: 72px; } .lay { width: 100px; }
.viewport { height: 936px; position: relative; background: #9299a1; }
.minor { stroke: #868d95; fill: none; } .major { stroke: #777a83; fill: none; }
.upright { stroke: #222; }
.axis { font: 13px "DejaVu Sans", sans-serif; fill: #53565a; }
.view-label { position: absolute; left: 1px; top: 1px; width: 31px; height: 19px; background: #00498a; color: #fff; font: 700 12px/20px "Open Sans", sans-serif; text-align: center; }

.right { flex: 1; border-left: 1px solid #747277; display: flex; flex-direction: column; min-width: 0; }
.phead { height: 60px; flex: none; position: relative; background: linear-gradient(#f6f6f6, #dcdbdd); border-bottom: 1px solid #d3ced5; }
.ptitle { text-align: center; padding: 6px 18px 0 0; letter-spacing: -.12px; }
.gearbtn { position: absolute; right: 2px; top: 5px; width: 28px; height: 16px; border: 1px solid #a4a3a6; border-radius: 4px; display: flex; align-items: center; justify-content: center; gap: 2px; background: #f4f4f4; }
.picons { display: flex; }
.p1 { gap: 7px; padding: 8px 0 0 120px; }
.props { height: 425px; flex: none; padding: 9px 8px 0; overflow: hidden; display: flex; flex-direction: column; }
.row { display: flex; align-items: center; }
.lab { width: 47px; margin-right: 8px; text-align: right; }
.field { width: 216px; height: 18px; background: #fff; border: 1px solid #d9d5db; border-bottom-color: #a9a6ab; padding-left: 3px; line-height: 16px; }
.r-size { margin-top: 8px; }
.r-lock { margin: 5px 0 0 20px; }
.props hr { width: 283px; margin: 8px 0 0; border: 0; border-top: 1px solid #d7d2d9; flex: none; }
.props h4 { margin: 8px 0 0; font: inherit; letter-spacing: .1px; height: 15px; }
.radios { margin: 1px 0 0 21px; }
.props hr.second { margin-top: 22px; }
.choose { display: flex; align-items: center; margin: 7px 0 4px 25px; height: 15px; }
.choose svg { margin-left: 38px; }
.r22 { height: 22px; margin-left: 20px; letter-spacing: 0; }
.props hr.third { margin-top: 14px; }
.cam { margin-top: 8px; height: 111px; }
.cam div { height: 27px; display: flex; align-items: flex-start; }
.cam span { width: 85px; margin-right: 8px; text-align: right; line-height: 18px; letter-spacing: .1px; }
.cam b { width: 60px; height: 18px; font-weight: 400; background: #fff; border: 1px solid #d9d5db; border-bottom-color: #a9a6ab; padding-left: 3px; line-height: 16px; }
.phead.blocks { height: 62px; border-top: 3px solid #77757a; }
.phead.blocks .ptitle { padding-top: 5px; letter-spacing: 0; }
.phead.blocks .gearbtn { top: 4px; }
.p2 { padding: 6px 0 0 44px; gap: 6px; }
.p2 svg { width: 24px; height: 24px; fill: none; stroke: #77767a; }
.p2 .sel { stroke: #1a7df8; }
.blocks-body { flex: 1; display: flex; flex-direction: column; padding: 8px 12px 0 12px; min-height: 0; }
.lists { display: flex; height: 373px; }
.blocklist { width: 94px; flex: none; border: 1px solid #e3dfe5; background: repeating-linear-gradient(#fff 0 19px, #f1f4f3 19px 38px); }
.detail { margin-left: 1px; flex: 1; min-width: 0; display: flex; flex-direction: column; }
.preview { width: 140px; height: 93px; margin-left: 20px; background: #a3a8b0; flex: none; }
.segs { display: flex; position: relative; z-index: 1; margin: 9px 0 -9px 3px; width: 174px; height: 18px; background: #e3dfe6; border: 1px solid #d9d5db; border-radius: 5px; line-height: 16px; }
.seg { text-align: center; width: 64px; }
.seg.on { width: 67px; background: #fff; border-radius: 5px; margin: -1px 0 0 -1px; height: 18px; line-height: 18px; box-shadow: 0 .5px 1.500px #777; }
.s3 { width: 42px; border-left: 1px solid #c9c5cc; margin: 3px 0; line-height: 10px; }
.card { flex: 1; background: #e9e5eb; border: 1px solid #dbd6dd; border-radius: 5px; padding: 18px 2px 0 0; }
.info { display: flex; height: 22px; line-height: 22px; overflow: hidden; white-space: nowrap; letter-spacing: .1px; }
.info span { width: 114px; flex: none; text-align: right; margin-right: 5px; }
.info em { font-style: normal; color: #b3afb5; width: 57px; overflow: hidden; }
.desc { width: 141px; height: 55px; margin: 5px 0 0 19px; background: #fff; border: 1px solid #d0ccd2; border-bottom-color: #aaa6ac; color: #bcb9be; padding: 1px 3px; letter-spacing: .15px; }
.actions { display: flex; justify-content: space-between; margin-top: 7px; }
.act { width: 33px; height: 17px; margin-top: 1px; background: #fff; border-radius: 4px; box-shadow: 0 .5px 1.500px #888; display: flex; align-items: center; justify-content: center; gap: 5px; }
.insert { width: 48px; height: 17px; line-height: 16px; text-align: center; background: #f6f3f7; border-radius: 4px; box-shadow: 0 .5px 1.500px #bbb; color: #b5b1b7; }

.status { height: 28px; flex: none; background: linear-gradient(#d4d4d4, #cacaca); display: flex; align-items: center; padding: 2px 0 0 5px; }
.cmd { margin-left: 3px; width: 1388px; }
.units { width: 74px; }
.cplane { width: 70px; height: 16px; margin-top: -2px; border: 1px solid #8f8f8f; border-radius: 4px; display: flex; align-items: center; justify-content: space-between; padding: 0 4px 1px; }
.cx { width: 82px; margin-left: 14px; } .cy { width: 85px; } .cz { width: 80px; }
```
